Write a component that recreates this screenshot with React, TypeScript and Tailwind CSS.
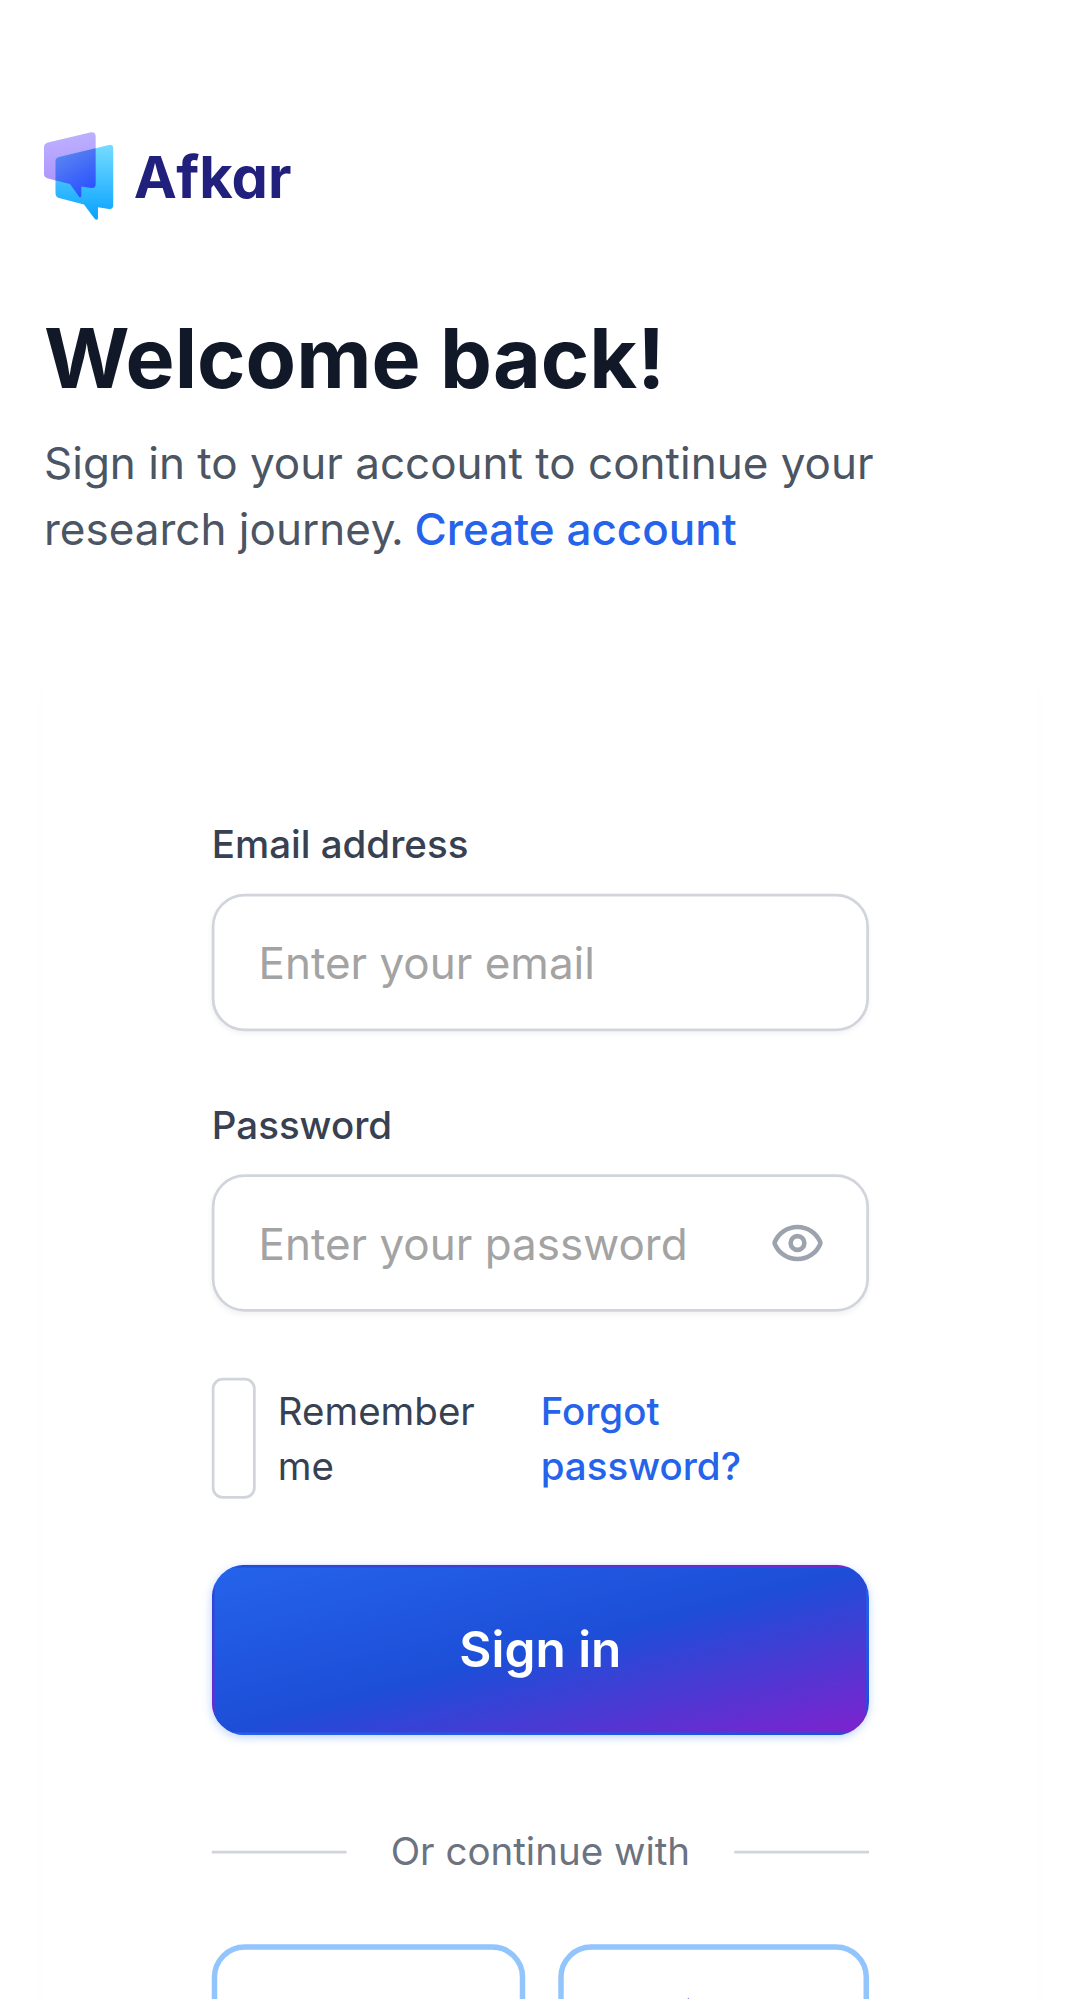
import { Eye } from "lucide-react";

const backBubble =
  "M48 142.400L90 132.500Q95.700 131.300 95.700 136.500V184Q95.700 188.200 91.500 187.900L81.300 186.500V196Q81 198.500 79 196.500L70 184L48 178.500Q44 177.500 44 174V147Q44 143.500 48 142.400Z";
const frontBubble =
  "M59 157L109 145Q113.300 144 113.300 149V205Q113.300 209.500 109 209L98 207.300V218Q97.500 221.500 94.500 218.500L84 204.500L59 198Q55.500 197 55.500 193V161Q55.500 158 59 157Z";

function Logo() {
  return (
    <div className="flex h-8 items-center">
      <svg className="h-8 w-[25.45px] shrink-0 overflow-visible" viewBox="44 132 70 88" fill="none">
        <defs>
          <linearGradient id="violet" x1="60" y1="135" x2="65" y2="185" gradientUnits="userSpaceOnUse">
            <stop stopColor="#bdb0ff" />
            <stop offset="1" stopColor="#ab93fc" />
          </linearGradient>
          <linearGradient id="sky" x1="95" y1="145" x2="95" y2="215" gradientUnits="userSpaceOnUse">
            <stop stopColor="#74dcff" />
            <stop offset="1" stopColor="#0ea5ff" />
          </linearGradient>
          <linearGradient id="overlap" x1="62" y1="150" x2="88" y2="192" gradientUnits="userSpaceOnUse">
            <stop stopColor="#5c86f0" />
            <stop offset="1" stopColor="#2a52ff" />
          </linearGradient>
          <clipPath id="front">
            <path d={frontBubble} />
          </clipPath>
        </defs>
        <path fill="url(#violet)" d={backBubble} />
        <path fill="url(#sky)" d={frontBubble} />
        <path clipPath="url(#front)" fill="url(#overlap)" d={backBubble} />
      </svg>
      <span className="mt-0.5 ml-[7.2px] text-[21px] leading-8 font-bold text-[#21217d] [font-feature-settings:'cv11']">
        Afkar
      </span>
    </div>
  );
}

const labelClass = "block text-sm font-medium text-[#374151]";
const fieldClass =
  "block h-[50px] w-full rounded-xl border border-[#d1d5db] bg-white px-4 text-base text-[#111827] shadow-[0_1px_2px_rgba(0,0,0,0.05)] outline-none placeholder:text-[#a3a3a3]";
const socialClass =
  "flex h-[60px] justify-center gap-2 rounded-xl border-2 border-[#93c5fd] bg-white pt-4";

export default function App() {
  return (
    <div className="h-[1999px] w-[1081px] overflow-hidden bg-white">
      <main className="h-[727px] w-[393px] origin-top-left scale-[2.75] overflow-hidden px-4 pt-12 font-[Inter,sans-serif]">
        <Logo />
        <h1 className="mt-8 text-3xl leading-9 font-bold text-[#111827]">Welcome back!</h1>
        <p className="mt-2 text-base whitespace-nowrap text-[#4b5563]">
          Sign in to your account to continue your
          <br />
          research journe<span className="tracking-[-1.7px]">y</span>
          <span className="tracking-[-0.25px]">. </span>
          <a href="#" className="font-medium text-[#2563eb]">
            Create account
          </a>
        </p>
        <section className="mt-8 h-[560px] rounded-2xl border border-white bg-white px-[60px] pt-[60px] shadow-[0_4px_6px_rgba(0,0,0,0.014)]">
          <form className="flex flex-col gap-6" onSubmit={(e) => e.preventDefault()}>
            <div className="flex flex-col gap-2">
              <label className={labelClass} htmlFor="email">
                Email address
              </label>
              <input id="email" type="email" className={fieldClass} placeholder="Enter your email" />
            </div>
            <div className="flex flex-col gap-2">
              <label className={labelClass} htmlFor="password">
                Password
              </label>
              <div className="relative">
                <input id="password" type="password" className={fieldClass} placeholder="Enter your password" />
                <button
                  type="button"
                  aria-label="Show password"
                  className="absolute inset-y-0 right-4 flex items-center text-[#9ca3af]"
                >
                  <Eye className="size-5" />
                </button>
              </div>
            </div>
            <div className="flex h-11 items-center text-sm">
              <input
                type="checkbox"
                aria-label="Remember me"
                className="h-11 w-4 shrink-0 appearance-none rounded border border-[#d1d5db] bg-white"
              />
              <span className="ml-2 w-[95.6px] shrink-0 text-[#374151]">
                Remember
                <br />
                me
              </span>
              <a href="#" className="font-medium text-[#2563eb]">
                Forgot
                <br />
                password?
              </a>
            </div>
            <button className="flex h-[62px] w-full items-center justify-center rounded-xl border border-transparent bg-[linear-gradient(to_bottom_right,#2563eb,#1d4ed8,#7e22ce)] text-lg font-semibold text-white shadow-[0_1px_3px_rgba(59,130,246,0.3)]">
              Sign in
            </button>
          </form>
          <div className="mt-8 flex items-center text-sm whitespace-nowrap text-[#6b7280]">
            <span className="flex-1 border-t border-[#d1d5db]" />
            <span className="px-4">Or continue with</span>
            <span className="flex-1 border-t border-[#d1d5db]" />
          </div>
          <div className="mt-6 grid grid-cols-2 gap-3">
            <button aria-label="Continue with first provider" className={socialClass} />
            <button aria-label="Continue with second provider" className={socialClass}>
              <svg className="mr-[18px] size-5" viewBox="0 0 20 20" fill="#818cf8">
                <path d="M10.300 1.400L13 5.500H7.600Z" />
              </svg>
            </button>
          </div>
        </section>
      </main>
    </div>
  );
}
